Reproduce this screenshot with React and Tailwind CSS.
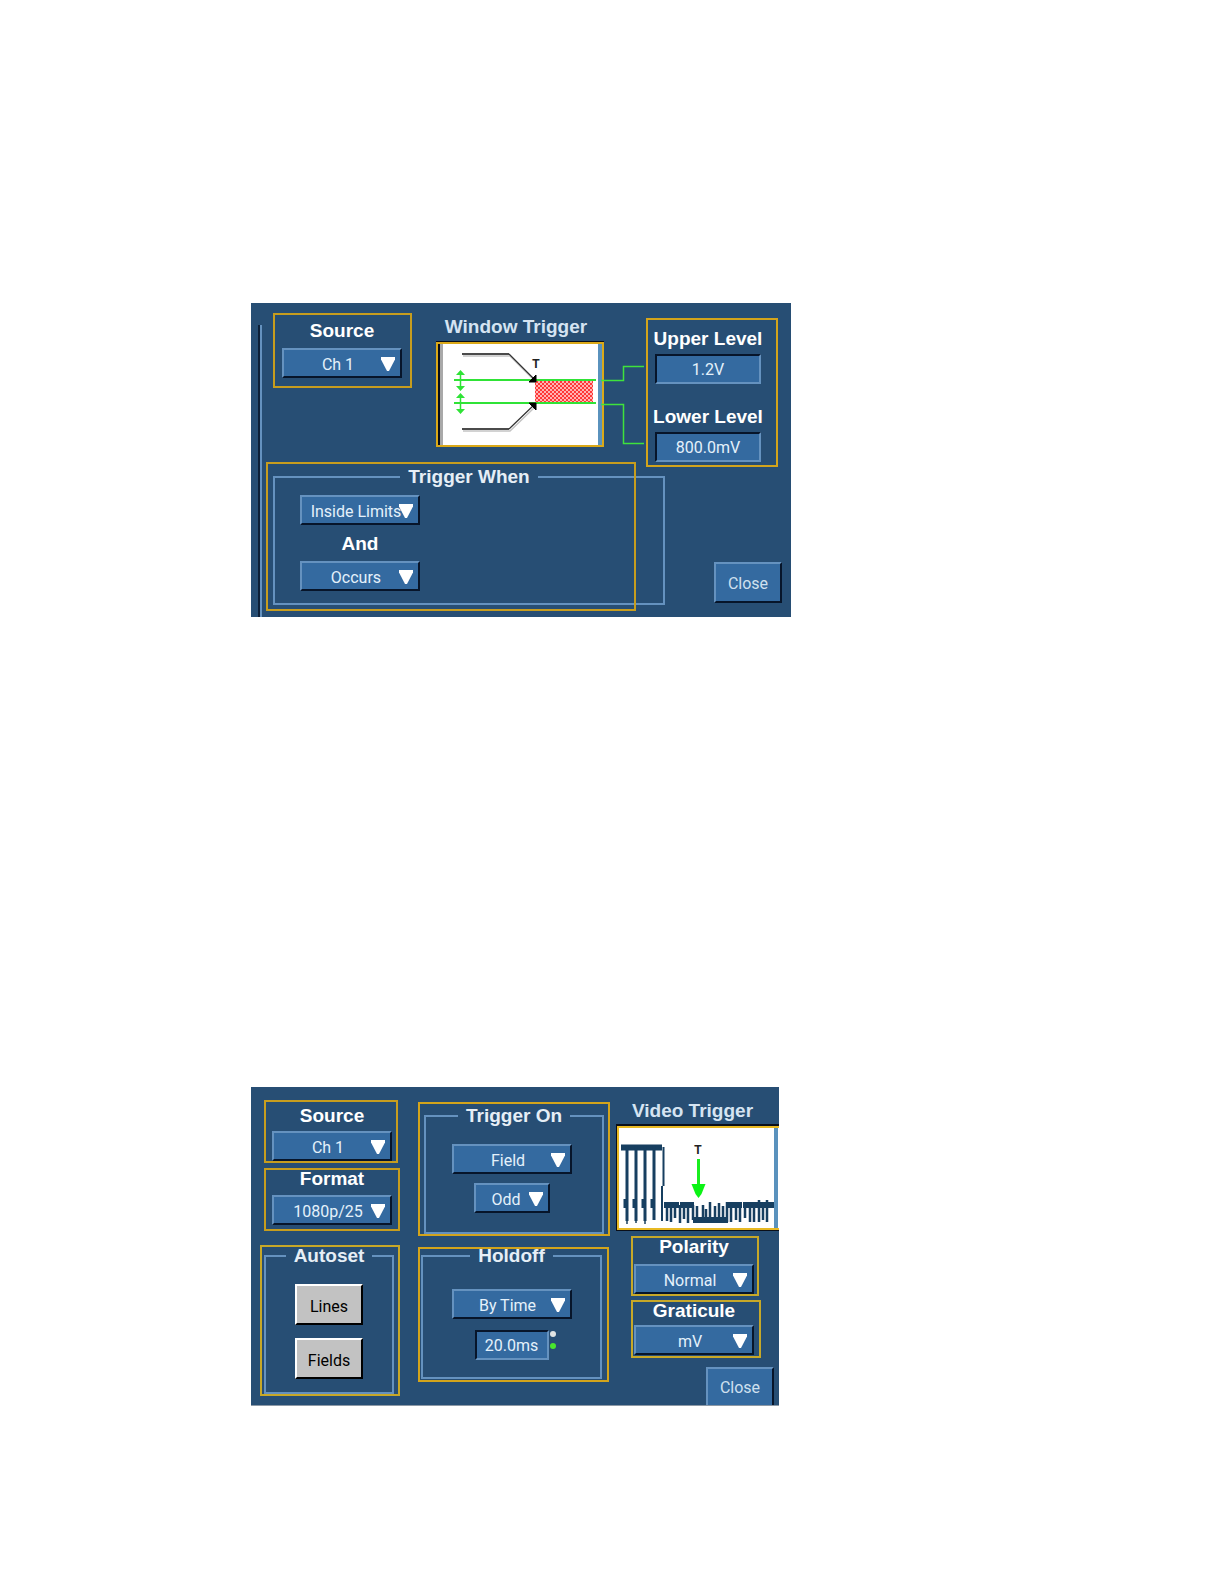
const BEVEL = "border-2 border-t-[#6592bf] border-l-[#6592bf] border-b-[#07152a] border-r-[#07152a] bg-[#346aa0]";
const HEADING = "font-['Liberation_Sans',sans-serif] text-[19px] leading-[18px] font-bold whitespace-nowrap";
const GREY_BUTTON = "h-[41px] w-[68px] border-2 border-t-white border-r-black border-b-black border-l-white bg-[#c2c2c2] pt-1 text-[16px] text-black";

function Title({ children, ...rest }) {
  return (
    <label className={`block w-[120px] text-center text-white ${HEADING}`} {...rest}>
      {children}
    </label>
  );
}

function Dropdown({ id, label, options, narrow }) {
  return (
    <div className={narrow ? "relative w-[76px]" : "relative w-[120px]"}>
      <select
        id={id}
        aria-label={label}
        className={`block h-[30px] w-full appearance-none pt-[3px] text-[16px] leading-5 text-[#e4f1fb] [text-align-last:center] ${narrow ? "pr-4 pl-1" : "pr-2"} ${BEVEL}`}
      >
        {options.map((o) => (
          <option key={o}>{o}</option>
        ))}
      </select>
      <svg
        aria-hidden="true"
        viewBox="0 0 16 16"
        className="pointer-events-none absolute top-[8px] right-[6px] h-4 w-4 fill-white"
      >
        <path d="M1 1H15V3.500L9 15H7L1 3.500Z" />
      </svg>
    </div>
  );
}

function ValueBox({ id, label, value, narrow }) {
  return (
    <input
      id={id}
      aria-label={label}
      defaultValue={value}
      className={`block h-[30px] border-2 border-t-[#07152a] border-l-[#07152a] border-r-[#6592bf] border-b-[#6592bf] bg-[#346aa0] text-center text-[16px] leading-5 text-[#e4f1fb] ${narrow ? "w-[74px]" : "w-[106px]"}`}
    />
  );
}

function Group({ title, children, className }) {
  return (
    <fieldset className={`min-w-0 border-2 border-[#6592bf] ${className}`}>
      <legend className={`mx-auto px-2 text-[#e6eef6] ${HEADING}`}>{title}</legend>
      {children}
    </fieldset>
  );
}

function WindowGraphic() {
  return (
    <svg viewBox="0 0 168 106" className="block h-[106px] w-[168px]" role="img" aria-label="Window trigger waveform">
      <defs>
        <pattern id="dots" width="4" height="4" patternUnits="userSpaceOnUse">
          <rect width="4" height="4" fill="#ffb4b4" />
          <rect width="2" height="2" fill="#ff3838" />
          <rect x="2" y="2" width="2" height="2" fill="#ff3838" />
        </pattern>
      </defs>
      <rect width="168" height="106" fill="#0a0f1a" />
      <rect x="4" y="3" width="159" height="101" fill="#fff" />
      <rect x="4" y="3" width="3" height="101" fill="#a9a9a9" />
      <rect x="162" y="3" width="4" height="101" fill="#5a92bd" />
      <rect x="99" y="40" width="58" height="22" fill="url(#dots)" />
      <g fill="none" stroke="#c4c4c4" strokeWidth="1.500">
        <path d="M27 15H74L100 41M27 90H74L100 65" />
      </g>
      <g fill="none" stroke="#111" strokeWidth="2">
        <path d="M26 13H73M26 88H73" strokeWidth="1.500" />
        <path d="M73 13L99 39M73 88L99 63" strokeWidth="1.200" stroke="#333" />
      </g>
      <g stroke="#2fe336" strokeWidth="2">
        <path d="M18 39H160M18 62H160" />
      </g>
      <path d="M93 41L100 34V41ZM93 62H100V69Z" fill="#000" stroke="#000" />
      <g fill="none" stroke="#2fe336" strokeWidth="1.500">
        <path d="M24.500 31V48M24.500 54V71" />
      </g>
      <g fill="#2fe336">
        <path d="M24.500 29L29 34H20ZM24.500 50L29 45H20ZM24.500 52L29 57H20ZM24.500 73L29 68H20Z" />
      </g>
      <text x="100" y="27" textAnchor="middle" className="font-['Liberation_Sans'] text-[12px] font-bold" fill="#222">T</text>
      <rect x="1" y="2" width="166" height="103" fill="none" stroke="#dba918" strokeWidth="2" />
    </svg>
  );
}

function Connectors() {
  return (
    <svg aria-hidden="true" viewBox="0 0 42 106" className="block h-[106px] w-[42px] overflow-visible">
      <path d="M-3 39.500H19.500V25.500H40M-3 63.500H19.500V102.500H40" fill="none" stroke="#3fe23c" strokeWidth="1.500" />
    </svg>
  );
}

function VideoGraphic() {
  return (
    <svg viewBox="0 0 163 107" className="block h-[107px] w-[163px]" role="img" aria-label="Video trigger waveform">
      <rect width="163" height="107" fill="#0a0f1a" />
      <rect x="3" y="3" width="160" height="102" fill="#fff" />
      <rect x="158" y="3" width="4" height="102" fill="#5a92bd" />
      <g fill="none" stroke="#173f60">
        <path d="M5 23.500H46" strokeWidth="6" />
        <path d="M11 22V97M20 22V97M29 22V97M38 22V96" strokeWidth="3" />
        <path d="M11 97V100M20 97V99M29 97V100" strokeWidth="1.500" />
        <path d="M9 75V84M18 75V84M27 75V84M36 75V84" strokeWidth="3" />
        <path d="M47.500 23V62M46 62V97" strokeWidth="2" />
        <path d="M48 81H63M64 81H78M111 81H126M127 81H158" strokeWidth="6" />
        <path d="M51 81V97M55 81V98M59 81V94M64 81V99M68 81V95M72 81V99M77 81V96" strokeWidth="2.500" />
        <path d="M77 96H112" strokeWidth="6" />
        <path d="M81 82V98M87 81V98M90 85V98M94 78V98M99 82V98M103 79V98M107 82V98M111 78V98" strokeWidth="2.500" />
        <path d="M115 81V98M120 81V96M124 81V98M129 81V94M134 81V98M138 81V98M143 76V98M147 81V96M151 76V98" strokeWidth="2.500" />
      </g>
      <path d="M82.500 35V64" stroke="#19ee1f" strokeWidth="3" />
      <path d="M75.500 60H89.500L85.500 70L82.500 74L79.500 70Z" fill="#0bf314" />
      <text x="82" y="30" textAnchor="middle" className="font-['Liberation_Sans'] text-[12px] font-bold" fill="#222">T</text>
      <path d="M163 3H2V105H163" fill="none" stroke="#e8b923" strokeWidth="2" />
    </svg>
  );
}

function WindowTrigger() {
  return (
    <section className="flex w-full max-w-[540px] bg-[#274e74]">
      <div aria-hidden="true" className="mt-[22px] ml-[7px] w-[4px] border-r-2 border-l-2 border-r-[#6592bf] border-l-[#0d2038]" />
      <div className="flex flex-1 flex-col">
        <div className="flex items-start">
          <div className="mt-[10px] ml-[11px] w-[139px] border-2 border-[#c79d1e] pt-[7px] pb-[8px] pl-[7px]">
            <Title htmlFor="w-source">Source</Title>
            <div className="mt-[8px]">
              <Dropdown id="w-source" options={["Ch 1", "Ch 2"]} />
            </div>
          </div>
          <div className="ml-[24px] pt-[15px]">
            <h2 className={`mb-[5px] pr-2 text-center text-[#d5e4f2] ${HEADING}`}>Window Trigger</h2>
            <WindowGraphic />
          </div>
          <div className="pt-[38px]">
            <Connectors />
          </div>
          <div className="mt-[15px] w-[132px] border-2 border-[#d3a41c] pt-[10px] pb-[3px]">
            <Title htmlFor="upper">Upper Level</Title>
            <div className="mt-[6px] ml-[7px]"><ValueBox id="upper" value="1.2V" /></div>
            <div className="mt-[24px]"><Title htmlFor="lower">Lower Level</Title></div>
            <div className="mt-[6px] ml-[7px]"><ValueBox id="lower" value="800.0mV" /></div>
          </div>
        </div>
        <div className="flex items-end justify-between pt-[1px] pr-[9px] pb-[12px]">
          <div className="relative ml-[11px] w-[392px]">
            <Group title="Trigger When" className="h-[137px]">
              <div className="ml-[25px] flex w-[120px] flex-col pt-[9px]">
                <Dropdown label="Trigger when" options={["Inside Limits", "Outside Limits"]} />
                <div className="mt-[10px] mb-[8px]"><Title htmlFor="w-and">And</Title></div>
                <Dropdown id="w-and" options={["Occurs"]} />
              </div>
            </Group>
            <div aria-hidden="true" className="pointer-events-none absolute -top-[6px] right-[29px] -bottom-[6px] -left-[7px] border-2 border-[#c79d1e]" />
          </div>
          <button type="button" className={`mb-[2px] h-[41px] w-[68px] pt-[2px] text-[16px] text-[#cfe0ef] ${BEVEL}`}>Close</button>
        </div>
      </div>
    </section>
  );
}

function VideoTrigger() {
  return (
    <section className="flex w-full max-w-[528px] items-start border-b border-[#8d99a6] bg-[#274e74] pl-[9px]">
      <div className="flex w-[140px] flex-col pt-[13px]">
        <div className="ml-[4px] w-[134px] border-2 border-[#c79d1e] pt-[5px] pl-[6px]">
          <Title htmlFor="v-source">Source</Title>
          <div className="mt-[6px]"><Dropdown id="v-source" options={["Ch 1", "Ch 2"]} /></div>
        </div>
        <div className="mt-[5px] ml-[4px] border-2 border-[#c79d1e] pb-[4px] pl-[6px]">
          <Title htmlFor="v-format">Format</Title>
          <div className="mt-[7px]"><Dropdown id="v-format" options={["1080p/25", "1080i/60"]} /></div>
        </div>
        <div className="mt-[14px] border-2 border-[#c7a828] pr-[4px] pl-[2px]">
          <Group title="Autoset" className="h-[147px]">
            <div className="flex flex-col items-center gap-[13px] pt-[19px]">
              <button type="button" className={GREY_BUTTON}>Lines</button>
              <button type="button" className={GREY_BUTTON}>Fields</button>
            </div>
          </Group>
        </div>
      </div>
      <div className="ml-[18px] flex w-[192px] flex-col pt-[15px]">
        <div className="border-2 border-[#d3a41c] px-[4px] pt-[3px]">
          <Group title="Trigger On" className="h-[127px]">
            <div className="flex flex-col items-center gap-[9px] pt-[19px] pr-1">
              <Dropdown label="Trigger on" options={["Field", "Lines"]} />
              <Dropdown label="Field" narrow options={["Odd", "Even"]} />
            </div>
          </Group>
        </div>
        <div className="mt-[11px] w-[191px] border-2 border-[#d3a41c] pr-[5px] pb-[1px] pl-[1px]">
          <Group title="Holdoff" className="-mt-[2px] h-[132px]">
            <div className="flex flex-col items-center gap-[11px] pt-[24px]">
              <Dropdown label="Holdoff" options={["By Time"]} />
              <div className="relative">
                <ValueBox label="Holdoff time" value="20.0ms" narrow />
                <div aria-hidden="true" className="absolute top-[1px] left-full ml-[1px] flex flex-col gap-[6px]">
                  <span className="h-[6px] w-[6px] rounded-full bg-[#e0e4e4]" />
                  <span className="h-[6px] w-[6px] rounded-full bg-[#49e62d]" />
                </div>
              </div>
            </div>
          </Group>
        </div>
      </div>
      <div className="ml-[6px] flex flex-1 flex-col pt-[15px]">
        <h2 className={`mb-[4px] pr-[10px] text-center text-[#d5e4f2] ${HEADING}`}>Video Trigger</h2>
        <VideoGraphic />
        <div className="mt-[5px] ml-[15px] w-[128px] border-2 border-[#c7a828] pl-[1px]">
          <Title htmlFor="v-pol">Polarity</Title>
          <div className="mt-[8px]"><Dropdown id="v-pol" options={["Normal", "Inverted"]} /></div>
        </div>
        <div className="mt-[4px] ml-[15px] w-[130px] border-2 border-[#c7a828] pb-[1px] pl-[1px]">
          <Title htmlFor="v-grat">Graticule</Title>
          <div className="mt-[5px]"><Dropdown id="v-grat" options={["mV", "IRE"]} /></div>
        </div>
        <button type="button" className={`mt-[9px] mr-[5px] h-[38px] w-[68px] self-end pt-[2px] text-[16px] text-[#cfe0ef] ${BEVEL} border-b-0`}>Close</button>
      </div>
    </section>
  );
}

export default function App() {
  return (
    <main className="flex min-h-screen flex-col gap-[470px] bg-white pt-[303px] pr-4 pb-[178px] pl-[251px] font-['Roboto','Liberation_Sans',sans-serif]">
      <WindowTrigger />
      <VideoTrigger />
    </main>
  );
}
